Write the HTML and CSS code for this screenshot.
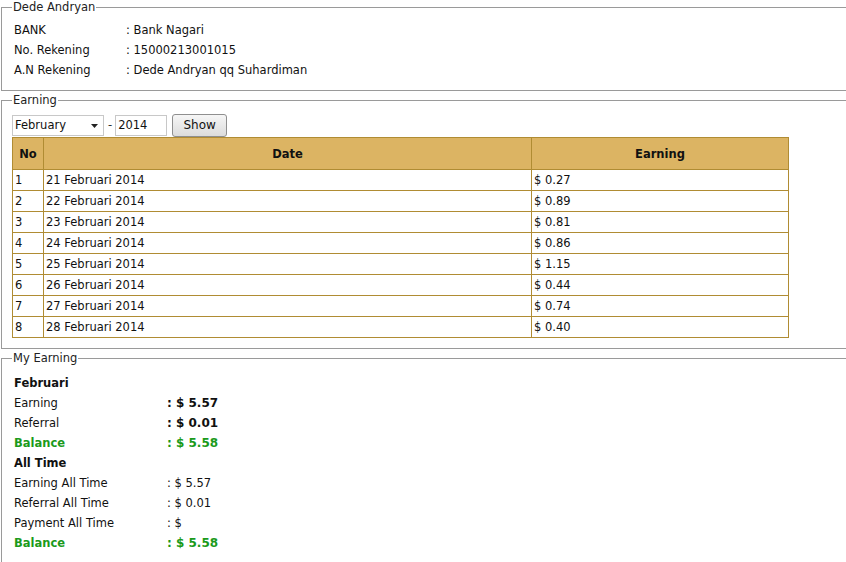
FILE: index.html
```html
<!DOCTYPE html>
<html>
<head>
<meta charset="utf-8">
<link rel="stylesheet" href="styles.css">
</head>
<body>
<fieldset class="box box-account">
  <legend>Dede Andryan</legend>
  <div class="info">
    <div class="lbl">BANK</div><div class="val">: Bank Nagari</div>
    <div class="lbl">No. Rekening</div><div class="val">: 15000213001015</div>
    <div class="lbl">A.N Rekening</div><div class="val">: Dede Andryan qq Suhardiman</div>
  </div>
</fieldset>

<fieldset class="box box-earning">
  <legend>Earning</legend>
  <form class="filter">
    <span class="select-wrap">
      <select class="month"><option>February</option></select>
      <svg class="caret" width="7" height="4" viewBox="0 0 7 4"><path d="M0 0H7L3.5 4Z" fill="#222"/></svg>
    </span>
    <span class="dash">-</span>
    <input class="year" type="text" value="2014">
    <button class="show" type="button">Show</button>
  </form>
  <table class="grid">
    <thead>
      <tr><th class="c-no">No</th><th class="c-date">Date</th><th class="c-earn">Earning</th></tr>
    </thead>
    <tbody>
      <tr><td>1</td><td>21 Februari 2014</td><td>$ 0.27</td></tr>
      <tr><td>2</td><td>22 Februari 2014</td><td>$ 0.89</td></tr>
      <tr><td>3</td><td>23 Februari 2014</td><td>$ 0.81</td></tr>
      <tr><td>4</td><td>24 Februari 2014</td><td>$ 0.86</td></tr>
      <tr><td>5</td><td>25 Februari 2014</td><td>$ 1.15</td></tr>
      <tr><td>6</td><td>26 Februari 2014</td><td>$ 0.44</td></tr>
      <tr><td>7</td><td>27 Februari 2014</td><td>$ 0.74</td></tr>
      <tr><td>8</td><td>28 Februari 2014</td><td>$ 0.40</td></tr>
    </tbody>
  </table>
</fieldset>

<fieldset class="box box-my">
  <legend>My Earning</legend>
  <div class="summary">
    <div class="head">Februari</div>
    <div class="lbl">Earning</div><div class="val bold">: $ 5.57</div>
    <div class="lbl">Referral</div><div class="val bold">: $ 0.01</div>
    <div class="lbl green bold">Balance</div><div class="val green bold">: $ 5.58</div>
    <div class="head">All Time</div>
    <div class="lbl">Earning All Time</div><div class="val">: $ 5.57</div>
    <div class="lbl">Referral All Time</div><div class="val">: $ 0.01</div>
    <div class="lbl">Payment All Time</div><div class="val">: $</div>
    <div class="lbl green bold">Balance</div><div class="val green bold">: $ 5.58</div>
  </div>
</fieldset>
</body>
</html>
```

FILE: styles.css
```css
html, body {
  margin: 0;
  padding: 0;
  background: #fff;
  overflow: hidden;
}
body {
  font-family: "DejaVu Sans", Verdana, sans-serif;
  font-size: 11.5px;
  color: #111;
  width: 846px;
  height: 562px;
}
.box {
  box-sizing: border-box;
  width: 860px;
  margin: 0 0 0 1px;
  padding: 3px 10px 10px 10px;
  border: 1px solid #9a9a9a;
  border-right: none;
  min-width: 0;
}
.box legend {
  padding: 0 1px;
  margin-left: 0;
  line-height: 14px;
  font-size: 11.5px;
  color: #222;
}
.box-account { padding-bottom: 10px; }
.box-earning { margin-top: 2px; padding-bottom: 10px; }
.box-my { margin-top: 2px; padding-bottom: 30px; }

.info {
  display: grid;
  grid-template-columns: 112px auto;
  padding-left: 2px;
  margin-top: 3px;
}
.info > div { line-height: 20px; height: 20px; }

.filter {
  display: flex;
  align-items: center;
  margin: 3px 0 0 0;
  height: 24px;
}
.select-wrap {
  position: relative;
  display: inline-block;
}
.month {
  appearance: none;
  -webkit-appearance: none;
  box-sizing: border-box;
  width: 92px;
  height: 21px;
  border: 1px solid #c8c8c8;
  background: #fff;
  font: inherit;
  font-size: 11.5px;
  padding: 0 0 0 2px;
  color: #111;
  border-radius: 0;
}
.caret {
  position: absolute;
  right: 6px;
  top: 9px;
}
.dash {
  margin: 0 3px 0 4px;
  color: #333;
}
.year {
  box-sizing: border-box;
  width: 52px;
  height: 21px;
  border: 1px solid #c8c8c8;
  font: inherit;
  font-size: 11.5px;
  padding: 0 2px;
  color: #111;
}
.show {
  box-sizing: border-box;
  margin-left: 5px;
  width: 55px;
  height: 23px;
  border: 1px solid #8f8f8f;
  border-radius: 3px;
  background: linear-gradient(#f6f6f6, #dcdcdc);
  font: inherit;
  font-size: 12px;
  color: #111;
  padding: 0;
}

.grid {
  border-collapse: collapse;
  width: 777px;
  margin-top: 0;
}
.grid th, .grid td {
  border: 1px solid #b08c33;
  padding: 0 2px;
}
.grid th {
  background: #dcb463;
  height: 31px;
  font-weight: bold;
  text-align: center;
  color: #111;
}
.grid td {
  height: 20px;
  line-height: 20px;
  text-align: left;
}
.c-no { width: 26px; }
.c-date { width: 483px; }

.summary {
  display: grid;
  grid-template-columns: 153px auto;
  padding-left: 2px;
  margin-top: 5px;
}
.summary > div { line-height: 20px; height: 20px; }
.summary .head { grid-column: 1 / span 2; font-weight: bold; }
.bold { font-weight: bold; }
.val.bold { font-size: 12px; }
.green { color: #1b9a1b; }
```
